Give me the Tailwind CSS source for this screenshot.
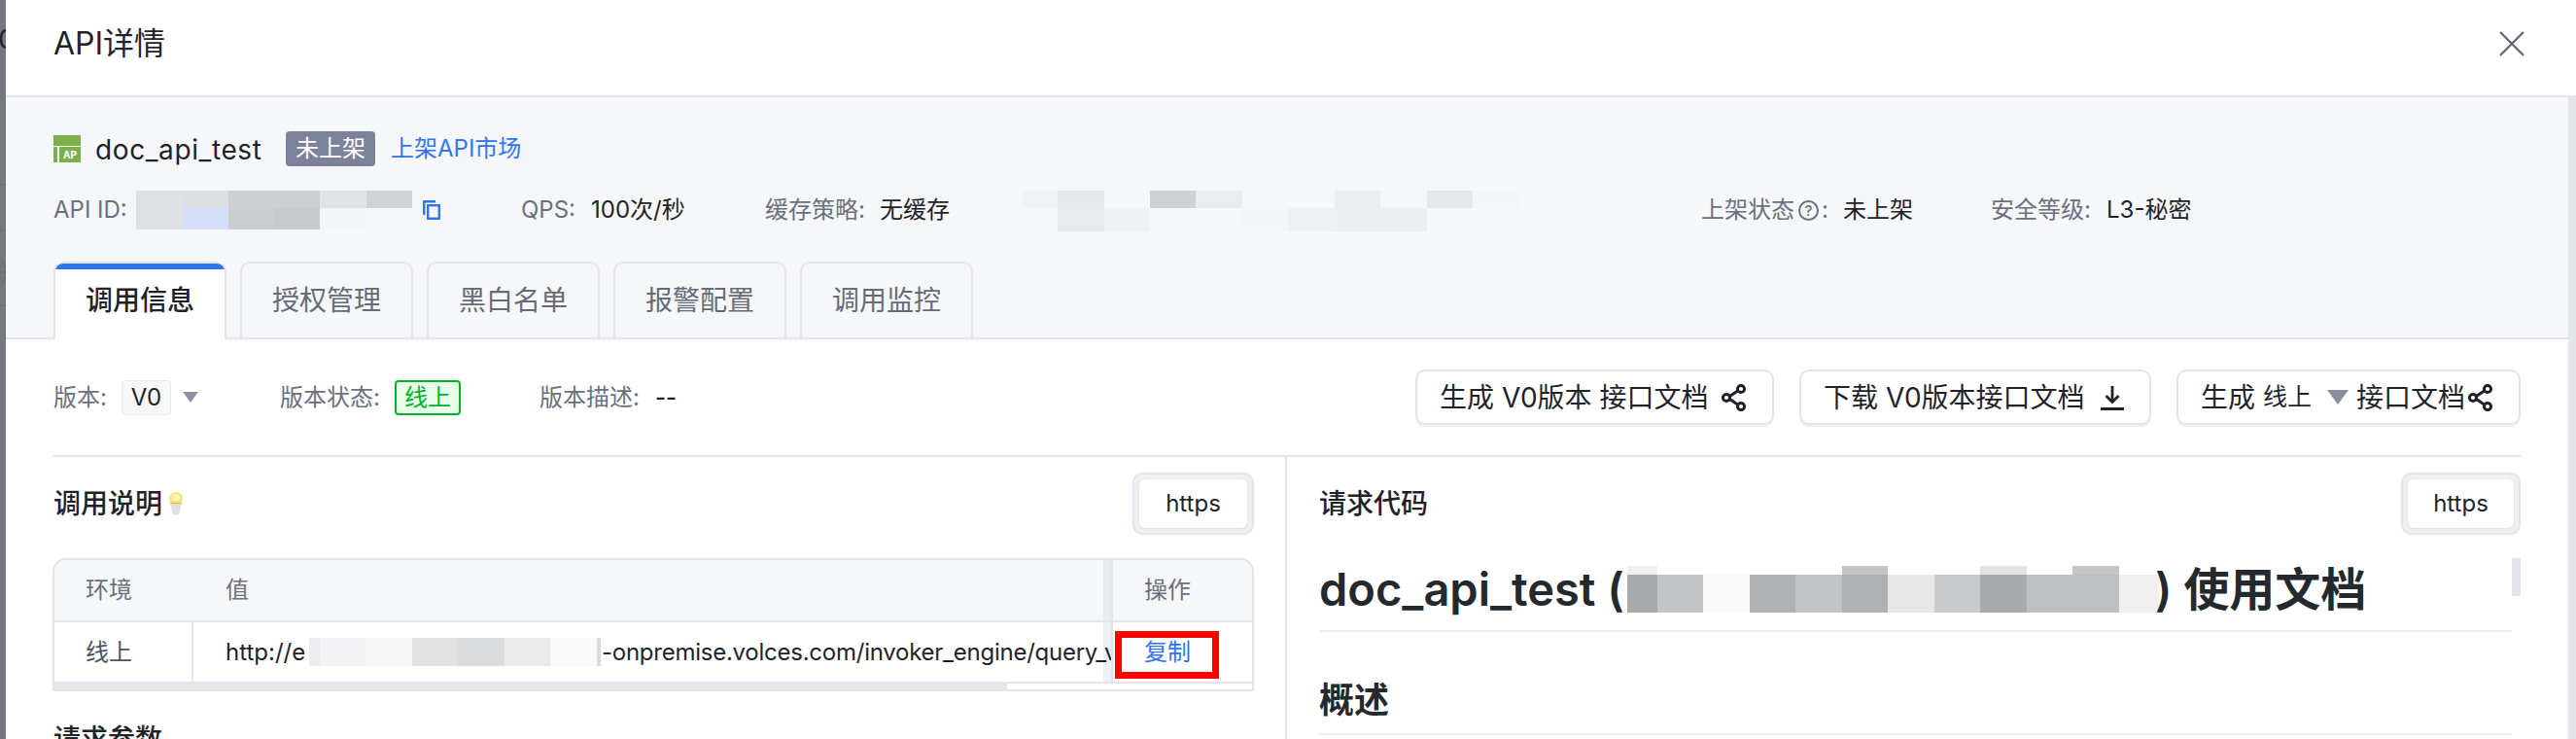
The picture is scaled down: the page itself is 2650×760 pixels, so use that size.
<!DOCTYPE html>
<html lang="zh-CN">
<head>
    <meta charset="UTF-8">
    <title>API详情</title>
    <script src="https://cdn.jsdelivr.net/npm/@tailwindcss/browser@4"></script>
</head>
<body class="w-[2650px] h-[760px] overflow-hidden flex bg-white text-[#1f2329] font-['Inter','Noto_Sans_CJK_SC',sans-serif]">
    <!-- page behind the drawer -->
    <div class="w-[6px] h-full bg-[#75787f] shrink-0">
        <svg class="w-[6px] h-[380px]" viewBox="0 0 6 380" fill="none">
            <path d="M6 31C2 32 1 36 1 40S2 48 6 49" stroke="#23262e" stroke-width="2.600"/>
            <path d="M0 190H6M0 237H6M0 314H6" stroke="#6a6d74" stroke-width="1"/>
            <path d="M1 268C4 270 6 274 6 280S4 290 1 292M0 280H6" stroke="#666972" stroke-width="1"/>
        </svg>
    </div>

    <div class="w-[2644px] h-full flex flex-col">
        <!-- title -->
        <div class="h-[100px] border-b-2 border-[#e3e5ea] flex items-center justify-between pl-[49px] pr-[53px] pb-[8px] shrink-0">
            <h2 class="text-[32px] leading-[40px]">API详情</h2>
            <svg class="w-[26px] h-[26px]" viewBox="0 0 26 26" fill="none" stroke="#5c6370" stroke-width="2.2"><path d="M1 1 25 25M25 1 1 25"/></svg>
        </div>

        <div class="flex-1 flex flex-col border-r-8 border-[#e3e5ea] min-h-0">
            <!-- api summary -->
            <div class="h-[249px] bg-[#f6f7f9] border-b-2 border-[#e3e5ea] pl-[49px] shrink-0">
                <div class="flex items-center h-[36px] mt-[35px]">
                    <div class="w-[28px] h-[28px] flex flex-col gap-[1px] shrink-0">
                        <div class="h-[11px] bg-[#7cb04c]"></div>
                        <div class="h-[16px] flex gap-[2px]">
                            <div class="w-[4px] bg-[#7cb04c]"></div>
                            <div class="flex-1 bg-[#7cb04c] text-white text-[10px] leading-[16px] font-bold text-center">AP</div>
                        </div>
                    </div>
                    <span class="ml-[15px] w-[196px] pt-[2px] text-[28px] leading-[36px] tracking-[0.6px]">doc_api_test</span>
                    <span class="w-[92px] h-[36px] rounded-[4px] bg-[#7b8299] text-white text-[24px] leading-[36px] text-center">未上架</span>
                    <a class="ml-[16px] text-[24px] leading-[36px] text-[#2f74f5]">上架API市场</a>
                </div>

                <div class="flex items-center h-[40px] mt-[25px] text-[24px] leading-[32px] text-[#6b7080] whitespace-nowrap">
                    <span class="w-[85px] shrink-0">API ID:</span>
                    <div class="w-[284px] h-[40px] self-start grid grid-cols-6 grid-rows-[18px_22px] shrink-0">
                        <div class="bg-[#dfe0e3]"></div><div class="bg-[#dcdfe2]"></div><div class="bg-[#cdcfd2]"></div><div class="bg-[#cdcfd2]"></div><div class="bg-[#e1e3e6]"></div><div class="bg-[#d0d2d5]"></div>
                        <div class="bg-[#dfe0e3]"></div><div class="bg-[#d2dff5]"></div><div class="bg-[#cbcdd0]"></div><div class="bg-[#c8cbce]"></div><div class="bg-[#f4f5f7]"></div><div class="bg-[#f5f6f8]"></div>
                    </div>
                    <svg class="ml-[11px] w-[18px] h-[20px] shrink-0" viewBox="0 0 18 20" fill="none" stroke="#2f74f5" stroke-width="2.4"><path d="M1.200 15V1.200H13"/><rect x="5.200" y="5.200" width="11.600" height="13.600"/></svg>
                    <span class="ml-[83px] w-[72px] shrink-0">QPS:</span>
                    <span class="w-[179px] shrink-0 text-[#1f2329]">100次/秒</span>
                    <span class="w-[118px] shrink-0">缓存策略:</span>
                    <span class="w-[147px] shrink-0 text-[#1f2329]">无缓存</span>
                    <div class="w-[511px] h-[42px] self-start flex flex-col shrink-0">
                        <div class="h-[18px] flex">
                            <div class="w-[36px] bg-[#f1f2f4]"></div><div class="w-[48px] bg-[#e7e8ea]"></div><div class="w-[47px]"></div><div class="w-[47px] bg-[#d0d1d4]"></div><div class="w-[48px] bg-[#ebecee]"></div><div class="w-[47px] bg-[#f5f6f8]"></div><div class="w-[48px]"></div><div class="w-[47px] bg-[#ecedef]"></div><div class="w-[48px] bg-[#f5f6f8]"></div><div class="w-[47px] bg-[#e6e7e9]"></div><div class="w-[48px] bg-[#f4f5f7]"></div>
                        </div>
                        <div class="h-[24px] flex">
                            <div class="w-[36px]"></div><div class="w-[48px] bg-[#e9eaec]"></div><div class="w-[47px] bg-[#f0f1f3]"></div><div class="w-[47px]"></div><div class="w-[48px]"></div><div class="w-[47px] bg-[#f4f5f7]"></div><div class="w-[48px] bg-[#eff0f2]"></div><div class="w-[47px] bg-[#eeeff1]"></div><div class="w-[48px] bg-[#eeeff1]"></div>
                        </div>
                    </div>
                    <span class="ml-[187px] w-[146px] shrink-0 flex items-center">上架状态<span class="ml-[4px] mr-[3px] w-[21px] h-[21px] rounded-full border-2 border-[#6b7080] text-[15px] leading-[17px] font-medium text-center">?</span>:</span>
                    <span class="w-[152px] shrink-0 text-[#1f2329]">未上架</span>
                    <span class="w-[119px] shrink-0">安全等级:</span>
                    <span class="text-[#1f2329]">L3-秘密</span>
                </div>

                <div class="flex items-start gap-[14px] mt-[33px] text-[28px] leading-[76px] text-center text-[#666b78]">
                    <div class="relative w-[178px] h-[80px] bg-white border-2 border-b-0 border-[#e3e5ea] rounded-t-[10px] text-[#1f2329] font-medium overflow-hidden">
                        <div class="h-[6px] bg-[#2f74f5] rounded-t-[8px]"></div>
                        <div class="-mt-[6px]">调用信息</div>
                    </div>
                    <div class="w-[178px] h-[78px] border-2 border-b-0 border-[#e3e5ea] rounded-t-[10px]">授权管理</div>
                    <div class="w-[178px] h-[78px] border-2 border-b-0 border-[#e3e5ea] rounded-t-[10px]">黑白名单</div>
                    <div class="w-[178px] h-[78px] border-2 border-b-0 border-[#e3e5ea] rounded-t-[10px]">报警配置</div>
                    <div class="w-[178px] h-[78px] border-2 border-b-0 border-[#e3e5ea] rounded-t-[10px]">调用监控</div>
                </div>
            </div>

            <!-- version bar -->
            <div class="h-[121px] ml-[49px] w-[2538px] border-b-2 border-[#e3e5ea] flex items-center shrink-0 whitespace-nowrap text-[24px] text-[#6b7080]">
                <span class="w-[70px]">版本:</span>
                <span class="w-[51px] h-[36px] rounded-[4px] bg-[#f6f7f9] border border-[#e8e9ed] text-[#1f2329] leading-[34px] text-center">V0</span>
                <span class="ml-[12px] w-0 h-0 border-x-[8px] border-t-[11px] border-x-transparent border-t-[#8a90a0]"></span>
                <span class="ml-[84px] w-[118px]">版本状态:</span>
                <span class="w-[68px] h-[36px] rounded-[4px] border-2 border-[#00b42a] bg-[#e8ffea] text-[#00b42a] leading-[32px] text-center">线上</span>
                <span class="ml-[81px] w-[119px]">版本描述:</span>
                <span class="text-[#1f2329] font-medium">--</span>

                <div class="ml-auto flex gap-[26px] text-[28px] text-[#1f2329]">
                    <button class="w-[369px] h-[57px] pl-[23px] rounded-[10px] border-2 border-[#e3e5ea] shadow-[0_2px_0_#eceef1] flex items-center">
                        <span>生成 V0版本 接口文档</span>
                        <svg class="ml-[14px] w-[26px] h-[28px]" viewBox="0 0 26 28" fill="none" stroke="#1f2329" stroke-width="3"><circle cx="5" cy="14" r="3.600"/><circle cx="20" cy="5" r="3.600"/><circle cx="20" cy="23" r="3.600"/><path d="M8.500 12.500 16.500 7M8.500 15.500 16.500 21"/></svg>
                    </button>
                    <button class="w-[362px] h-[57px] pl-[23px] rounded-[10px] border-2 border-[#e3e5ea] shadow-[0_2px_0_#eceef1] flex items-center">
                        <span>下载 V0版本接口文档</span>
                        <svg class="ml-[15px] w-[26px] h-[26px]" viewBox="0 0 26 26" fill="none" stroke="#1f2329" stroke-width="2.800"><path d="M13 1V17M6.500 11 13 17.500 19.500 11M1 24.500H25"/></svg>
                    </button>
                    <button class="w-[354px] h-[57px] pl-[23px] rounded-[10px] border-2 border-[#e3e5ea] shadow-[0_2px_0_#eceef1] flex items-center">
                        <span>生成</span>
                        <span class="ml-[8px] text-[25px]">线上</span>
                        <span class="ml-[16px] w-0 h-0 border-x-[11px] border-t-[15px] border-x-transparent border-t-[#8a90a0]"></span>
                        <span class="ml-[8px]">接口文档</span>
                        <svg class="ml-[3px] w-[26px] h-[28px]" viewBox="0 0 26 28" fill="none" stroke="#1f2329" stroke-width="3"><circle cx="5" cy="14" r="3.600"/><circle cx="20" cy="5" r="3.600"/><circle cx="20" cy="23" r="3.600"/><path d="M8.500 12.500 16.500 7M8.500 15.500 16.500 21"/></svg>
                    </button>
                </div>
            </div>

            <div class="flex flex-1 min-h-0 overflow-hidden">
                <!-- left panel -->
                <div class="w-[1318px] pl-[49px] pr-[32px] border-r-2 border-[#e3e5ea] shrink-0">
                    <div class="flex items-center justify-between h-[64px] mt-[16px]">
                        <div class="flex items-center">
                            <span class="text-[28px] font-medium">调用说明</span>
                            <svg class="ml-[6px] w-[16px] h-[24px]" viewBox="0 0 16 24"><circle cx="8" cy="7" r="7" fill="#ffe27a"/><circle cx="8" cy="5.500" r="4" fill="#fff3b8"/><path d="M2 11.500h12l-2.500 10a3.500 2 0 0 1-7 0Z" fill="#dfe0e3"/><path d="M2 11.500h12" stroke="#f0b840" stroke-width="1"/></svg>
                        </div>
                        <div class="w-[125px] h-[64px] rounded-[10px] bg-[#eef0f3] border-2 border-[#e3e5ea] p-[5px]">
                            <div class="h-full rounded-[6px] bg-white shadow-[0_1px_2px_#d9dbe0] text-[24px] leading-[50px] text-center">https</div>
                        </div>
                    </div>

                    <div class="mt-[24px] w-[1236px] h-[137px] -ml-[1px] border-2 border-[#e3e5ea] rounded-t-[14px] overflow-hidden text-[24px]">
                        <div class="flex h-[64px] bg-[#f6f7f9] border-b-2 border-[#e3e5ea] text-[#6b7080] leading-[62px]">
                            <div class="w-[145px] pl-[32px] shrink-0">环境</div>
                            <div class="relative flex-1 pl-[31px]">值<div class="absolute inset-y-0 right-0 w-[8px] bg-[#e9eaee]"></div></div>
                            <div class="w-[145px] pl-[32px] border-l-2 border-[#e3e5ea] shrink-0">操作</div>
                        </div>
                        <div class="flex h-[63px] border-b-2 border-[#e3e5ea] leading-[61px]">
                            <div class="w-[143px] pl-[32px] border-r-2 border-[#e3e5ea] text-[#4e5461] shrink-0">线上</div>
                            <div class="relative flex-1 min-w-0 pl-[33px] flex items-center overflow-hidden whitespace-nowrap">
                                <div class="absolute inset-y-0 right-0 w-[8px] bg-[#eef0f3]"></div>
                                <span class="relative w-[86px] shrink-0">http://e</span>
                                <div class="w-[300px] h-[29px] flex shrink-0">
                                    <div class="w-[11px] bg-[#ececee]"></div><div class="w-[47px] bg-[#f3f3f5]"></div><div class="w-[48px] bg-[#f8f8f9]"></div><div class="w-[47px] bg-[#e2e2e3]"></div><div class="w-[48px] bg-[#dbdcde]"></div><div class="w-[47px] bg-[#ebebec]"></div><div class="w-[48px] bg-[#fafafb]"></div><div class="w-[4px] bg-[#dcdcdf]"></div>
                                </div>
                                <span class="relative ml-[1px] tracking-[-0.25px]">-onpremise.volces.com/invoker_engine/query_v1</span>
                            </div>
                            <div class="relative w-[145px] pl-[32px] border-l-2 border-[#e3e5ea] text-[#2f74f5] shrink-0">
                                复制
                                <div class="absolute left-[2px] top-[9px] w-[107px] h-[49px] border-[7px] border-[#ff0000]"></div>
                            </div>
                        </div>
                        <div class="h-[6px] bg-white">
                            <div class="w-[980px] h-full bg-[#e3e5ea]"></div>
                        </div>
                    </div>

                    <h3 class="mt-[29px] text-[28px] leading-[40px] font-medium">请求参数</h3>
                </div>

                <!-- right panel -->
                <div class="w-[1318px] pl-[33px] pr-[49px] shrink-0">
                    <div class="flex items-center justify-between h-[64px] mt-[16px]">
                        <span class="text-[28px] font-medium">请求代码</span>
                        <div class="w-[123px] h-[64px] rounded-[10px] bg-[#eef0f3] border-2 border-[#e3e5ea] p-[5px]">
                            <div class="h-full rounded-[6px] bg-white shadow-[0_1px_2px_#d9dbe0] text-[24px] leading-[50px] text-center">https</div>
                        </div>
                    </div>
                    <div class="flex mt-[24px]">
                        <div class="w-[1227px] shrink-0">
                            <div class="h-[76px] border-b-2 border-[#eaecef] flex items-start whitespace-nowrap text-[#24292e] text-[47px] font-semibold leading-[64px]">
                                <span class="w-[317px] shrink-0">doc_api_test (</span>
                                <div class="w-[547px] h-[48px] mt-[8px] flex flex-col shrink-0">
                                    <div class="h-[9px] flex">
                                        <div class="w-[31px] bg-[#f0f0f0]"></div><div class="w-[190px]"></div><div class="w-[47px] bg-[#c4c5c7]"></div><div class="w-[95px]"></div><div class="w-[48px] bg-[#e1e2e3]"></div><div class="w-[47px]"></div><div class="w-[48px] bg-[#c4c5c7]"></div>
                                    </div>
                                    <div class="h-[39px] flex">
                                        <div class="w-[31px] bg-[#a9aaac]"></div><div class="w-[47px] bg-[#c3c4c5]"></div><div class="w-[48px] bg-[#fafafa]"></div><div class="w-[47px] bg-[#b0b1b3]"></div><div class="w-[48px] bg-[#c2c3c5]"></div><div class="w-[47px] bg-[#b0b1b3]"></div><div class="w-[48px] bg-[#e7e7e8]"></div><div class="w-[47px] bg-[#c9cacb]"></div><div class="w-[48px] bg-[#a9aaac]"></div><div class="w-[47px] bg-[#bebfc1]"></div><div class="w-[48px] bg-[#bebfc1]"></div><div class="w-[41px] bg-[#f0f0f1]"></div>
                                    </div>
                                </div>
                                <span class="-ml-[4px]">) 使用文档</span>
                            </div>
                            <div class="h-[106px] border-b-2 border-[#eaecef] pt-[46px] text-[#24292e] text-[36px] font-semibold leading-[48px]">概述</div>
                        </div>
                        <div class="w-[9px] h-[39px] bg-[#e3e5ea] shrink-0"></div>
                    </div>
                </div>
            </div>
        </div>
    </div>
</body>
</html>
